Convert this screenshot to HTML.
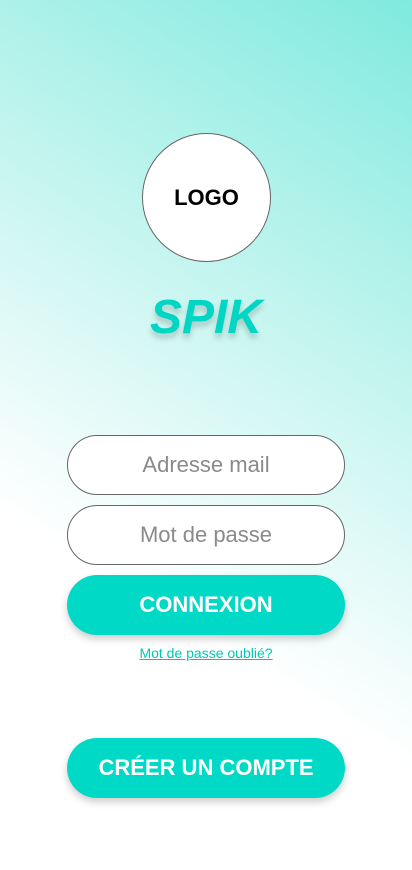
<!DOCTYPE html>
<html><head><meta charset="utf-8"><style>
html,body{margin:0;padding:0}
body{width:412px;height:870px;position:relative;overflow:hidden;font-family:"Segoe UI","Liberation Sans",sans-serif;background:linear-gradient(212deg,#80eadf 0%,#c4f5ef 35%,#ffffff 68%,#ffffff 100%)}
.logo{position:absolute;left:142px;top:133px;width:127px;height:127px;border:1px solid #666;border-radius:50%;background:#fff;display:flex;align-items:center;justify-content:center;font-weight:bold;font-size:22px;color:#000}
.title{position:absolute;left:0;width:412px;top:290px;text-align:center;font-size:48px;font-weight:bold;font-style:italic;color:#00d6c3;text-shadow:0 5px 6px rgba(0,0,0,0.18)}
.inp{position:absolute;left:67px;width:276px;height:58px;border:1px solid #666;border-radius:30px;background:#fff;text-align:center;line-height:58px;font-size:22px;color:#8a8a8a}
.btn{position:absolute;left:67px;width:278px;height:60px;border-radius:30px;background:#00d9c6;color:#fff;font-weight:bold;font-size:22px;text-align:center;line-height:60px;box-shadow:0 4px 8px rgba(0,0,0,0.2)}
.link{position:absolute;left:0;width:412px;top:645px;text-align:center;font-size:14px;color:#00c8b5;text-decoration:underline}
</style></head><body>
<div class="logo">LOGO</div>
<div class="title">SPIK</div>
<div class="inp" style="top:435px">Adresse mail</div>
<div class="inp" style="top:505px">Mot de passe</div>
<div class="btn" style="top:575px">CONNEXION</div>
<div class="link">Mot de passe oublié?</div>
<div class="btn" style="top:738px">CRÉER UN COMPTE</div>
</body></html>
